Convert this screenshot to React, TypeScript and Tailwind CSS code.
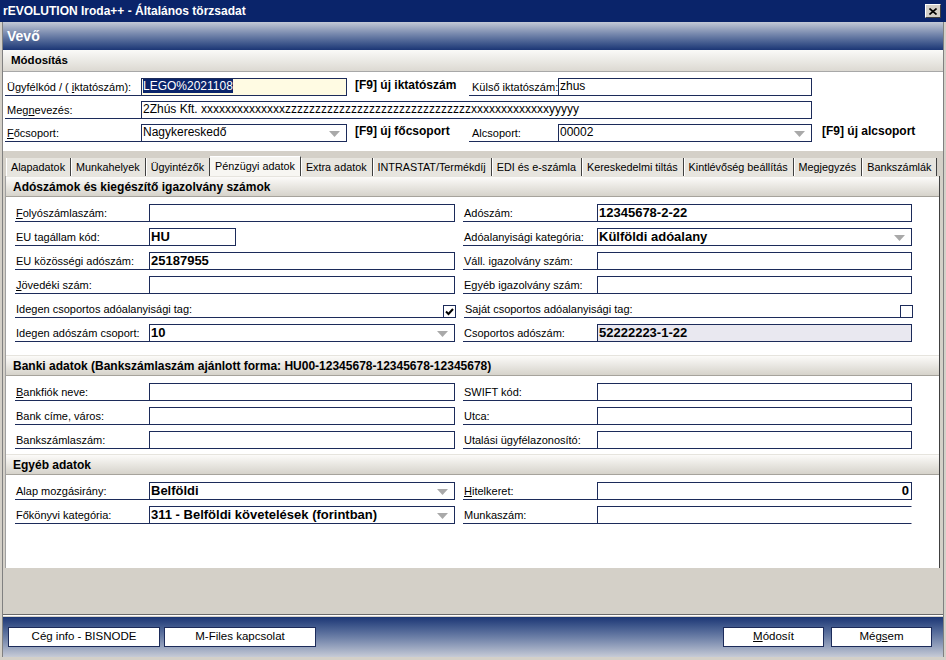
import React from 'react';

type Kids = { children?: React.ReactNode };

function Arrow() {
  return (
    <svg width="11" height="6" viewBox="0 0 11 6">
      <path d="M0 0 H11 L5.5 6 Z" fill="#a9a9a9" />
    </svg>
  );
}

function Label({ w, children }: { w: string } & Kids) {
  return (
    <div
      className={`${w} h-[18px] shrink-0 border-b border-[#1c2b5a] flex items-end pb-[1px] pl-[1px] text-[11px] leading-[13px] text-black whitespace-nowrap overflow-hidden`}
    >
      {children}
    </div>
  );
}

function Input({
  w,
  children,
  bold,
  bg = 'bg-white',
  drop,
  right,
  open,
}: { w: string; bold?: boolean; bg?: string; drop?: boolean; right?: boolean; open?: boolean } & Kids) {
  return (
    <div
      className={`${w} h-[18px] shrink-0 border border-[#1c2b5a] ${open ? 'border-r-transparent' : ''} ${bg} relative flex items-center ${
        right ? 'justify-end pr-[2px]' : 'pl-[1px]'
      } overflow-hidden whitespace-nowrap text-black ${bold ? 'font-bold text-[13px]' : 'text-[12px]'} leading-none`}
    >
      <span className="-mt-[2px]">{children}</span>
      {drop && (
        <span className="absolute right-[6px] top-[6px] flex">
          <Arrow />
        </span>
      )}
    </div>
  );
}

function Check({ checked }: { checked?: boolean }) {
  return (
    <div className="w-[13px] h-[13px] shrink-0 border border-[#1c2b5a] bg-white flex items-center justify-center">
      {checked && (
        <svg width="9" height="8" viewBox="0 0 9 8">
          <path d="M1 3.5 L3.5 6 L8 1" stroke="#000" strokeWidth="2" fill="none" />
        </svg>
      )}
    </div>
  );
}

function Section({ title }: { title: string }) {
  return (
    <div className="h-[21px] shrink-0 border-t border-[#e6e4de] border-b border-b-[#a6a39c] bg-gradient-to-b from-[#fcfbf9] to-[#d6d3cb] flex items-center pl-[7px] text-[12px] font-bold text-black">
      {title}
    </div>
  );
}

function PRow({
  l1,
  c1,
  l2,
  c2,
}: {
  l1: React.ReactNode;
  c1: React.ReactNode;
  l2: React.ReactNode;
  c2: React.ReactNode;
}) {
  return (
    <div className="flex items-end h-[18px]">
      <Label w="w-[134px]">{l1}</Label>
      <div className="w-[306px] flex">{c1}</div>
      <div className="w-[8px] shrink-0" />
      <Label w="w-[134px]">{l2}</Label>
      {c2}
    </div>
  );
}

const tabs = [
  'Alapadatok',
  'Munkahelyek',
  'Ügyintézők',
  'Pénzügyi adatok',
  'Extra adatok',
  'INTRASTAT/Termékdíj',
  'EDI és e-számla',
  'Kereskedelmi tiltás',
  'Kintlévőség beállítás',
  'Megjegyzés',
  'Bankszámlák',
];

const megnevezes =
  '2Zhús Kft. xxxxxxxxxxxxxxzzzzzzzzzzzzzzzzzzzzzzzzzzzzzzzxxxxxxxxxxxxxyyyyy';

export default function App() {
  return (
    <div className="w-[946px] h-[660px] bg-[#d4d0c8] flex flex-col overflow-hidden font-['Liberation_Sans',Arial,sans-serif]">
      {/* title bar */}
      <div className="h-[22px] shrink-0 bg-[#0a246a] flex items-center justify-between pl-[3px] pr-[5px]">
        <span className="text-white font-bold text-[12px]">rEVOLUTION Iroda++ - Általános törzsadat</span>
        <div className="w-[16px] h-[14px] bg-[#d4d0c8] border border-t-white border-l-white border-r-[#404040] border-b-[#404040] flex items-center justify-center">
          <svg width="8" height="7" viewBox="0 0 8 7">
            <path d="M0.5 0.5 L7.5 6.5 M7.5 0.5 L0.5 6.5" stroke="#000" strokeWidth="1.6" />
          </svg>
        </div>
      </div>

      <div className="flex-1 flex flex-col px-[2px]">
        <div className="flex-1 flex flex-col border-x border-[#808080]">
          {/* Vevő */}
          <div className="h-[28px] shrink-0 bg-gradient-to-b from-[#c4c9d6] via-[#6b7ea6] to-[#1c3675] flex items-center pl-[4px]">
            <span className="text-white font-bold text-[14px]">Vevő</span>
          </div>
          {/* Módosítás */}
          <div className="h-[22px] shrink-0 bg-gradient-to-b from-[#fafaf8] to-[#dcd9d2] border-b border-[#a8a8a8] flex items-center pl-[8px]">
            <span className="font-bold text-[11.5px] text-black">Módosítás</span>
          </div>

          {/* header form */}
          <div className="h-[79px] shrink-0 bg-white pt-[6px] flex flex-col gap-[5px]">
            <div className="flex items-end h-[18px]">
              <div className="w-[2px]" />
              <Label w="w-[136px]">
                <span className="pl-[1px]">
                  Ügyfélkód / ( <u>i</u>ktatószám):
                </span>
              </Label>
              <Input w="w-[206px]" bg="bg-[#fffbe3]">
                <span className="bg-[#0a246a] text-white">LEGO%2021108</span>
              </Input>
              <div className="w-[122px] shrink-0 pl-[8px] pb-[2px] font-bold text-[12px] whitespace-nowrap">
                [F9] új iktatószám
              </div>
              <Label w="w-[89px]">
                <span className="pl-[2px]">Külső iktatószám:</span>
              </Label>
              <Input w="w-[254px]">zhus</Input>
            </div>
            <div className="flex items-end h-[18px]">
              <div className="w-[2px]" />
              <Label w="w-[136px]">
                <span className="pl-[1px]">
                  Meg<u>n</u>evezés:
                </span>
              </Label>
              <Input w="w-[671px]">{megnevezes}</Input>
            </div>
            <div className="flex items-end h-[18px]">
              <div className="w-[2px]" />
              <Label w="w-[136px]">
                <span className="pl-[1px]">
                  <u>F</u>őcsoport:
                </span>
              </Label>
              <Input w="w-[206px]" drop>
                Nagykereskedő
              </Input>
              <div className="w-[122px] shrink-0 pl-[8px] pb-[2px] font-bold text-[12px] whitespace-nowrap">
                [F9] új főcsoport
              </div>
              <Label w="w-[89px]">
                <span className="pl-[2px]">Alcsoport:</span>
              </Label>
              <Input w="w-[254px]" drop>
                00002
              </Input>
              <div className="pl-[10px] pb-[2px] font-bold text-[12px] whitespace-nowrap">[F9] új alcsoport</div>
            </div>
          </div>

          {/* tabs */}
          <div className="h-[5px] shrink-0" />
          <div className="h-[20px] shrink-0 ml-[3px] flex items-end">
            {tabs.map((t) => {
              const active = t === 'Pénzügyi adatok';
              return (
                <div
                  key={t}
                  className={
                    active
                      ? 'h-[20px] px-[5px] bg-[#f7f6f2] border-t border-white border-r border-r-[#404040] flex items-center text-[10.8px] text-black whitespace-nowrap'
                      : 'h-[18px] px-[5px] bg-[#e7e5df] border-r border-r-[#404040] shadow-[inset_1px_0_0_#ffffff] flex items-center text-[10.8px] text-black whitespace-nowrap'
                  }
                >
                  {t}
                </div>
              );
            })}
          </div>

          {/* panel */}
          <div className="ml-[2px] w-[935px] h-[392px] shrink-0 bg-white border-l border-[#a0a0a0] border-r border-r-[#404040] flex flex-col">
            <Section title="Adószámok és kiegészítő igazolvány számok" />
            <div className="pl-[9px] pt-[7px] pb-[13px] flex flex-col gap-[6px]">
              <PRow
                l1={
                  <span>
                    <u>F</u>olyószámlaszám:
                  </span>
                }
                c1={<Input w="w-[306px]" />}
                l2="Adószám:"
                c2={
                  <Input w="w-[315px]" bold>
                    12345678-2-22
                  </Input>
                }
              />
              <PRow
                l1="EU tagállam kód:"
                c1={
                  <Input w="w-[87px]" bold>
                    HU
                  </Input>
                }
                l2="Adóalanyisági kategória:"
                c2={
                  <Input w="w-[315px]" bold drop>
                    Külföldi adóalany
                  </Input>
                }
              />
              <PRow
                l1="EU közösségi adószám:"
                c1={
                  <Input w="w-[306px]" bold>
                    25187955
                  </Input>
                }
                l2="Váll. igazolvány szám:"
                c2={<Input w="w-[315px]" />}
              />
              <PRow
                l1={
                  <span>
                    <u>J</u>övedéki szám:
                  </span>
                }
                c1={<Input w="w-[306px]" />}
                l2="Egyéb igazolvány szám:"
                c2={<Input w="w-[315px]" />}
              />
              <div className="flex items-end h-[18px]">
                <Label w="w-[428px]">Idegen csoportos adóalanyisági tag:</Label>
                <Check checked />
                <div className="w-[8px] shrink-0" />
                <Label w="w-[436px]">Saját csoportos adóalanyisági tag:</Label>
                <Check />
              </div>
              <PRow
                l1="Idegen adószám csoport:"
                c1={
                  <Input w="w-[306px]" bold drop>
                    10
                  </Input>
                }
                l2="Csoportos adószám:"
                c2={
                  <Input w="w-[315px]" bold bg="bg-[#e9e8f0]">
                    52222223-1-22
                  </Input>
                }
              />
            </div>

            <Section title="Banki adatok (Bankszámlaszám ajánlott forma: HU00-12345678-12345678-12345678)" />
            <div className="pl-[9px] pt-[7px] pb-[5px] flex flex-col gap-[6px]">
              <PRow
                l1={
                  <span>
                    <u>B</u>ankfiók neve:
                  </span>
                }
                c1={<Input w="w-[306px]" />}
                l2="SWIFT kód:"
                c2={<Input w="w-[315px]" />}
              />
              <PRow l1="Bank címe, város:" c1={<Input w="w-[306px]" />} l2="Utca:" c2={<Input w="w-[315px]" />} />
              <PRow
                l1="Bankszámlaszám:"
                c1={<Input w="w-[306px]" />}
                l2="Utalási ügyfélazonosító:"
                c2={<Input w="w-[315px]" />}
              />
            </div>

            <Section title="Egyéb adatok" />
            <div className="pl-[9px] pt-[7px] flex flex-col gap-[6px]">
              <PRow
                l1="Alap mozgásirány:"
                c1={
                  <Input w="w-[306px]" bold drop>
                    Belföldi
                  </Input>
                }
                l2={
                  <span>
                    <u>H</u>itelkeret:
                  </span>
                }
                c2={
                  <Input w="w-[315px]" bold right>
                    0
                  </Input>
                }
              />
              <PRow
                l1="Főkönyvi kategória:"
                c1={
                  <Input w="w-[306px]" bold drop>
                    311 - Belföldi követelések (forintban)
                  </Input>
                }
                l2="Munkaszám:"
                c2={<Input w="w-[315px]" open />}
              />
            </div>
          </div>

          <div className="flex-1" />

          {/* bottom bar */}
          <div className="h-[43px] shrink-0 border-t border-[#6a6a6a] shadow-[inset_0_1px_0_#ffffff] pt-[2px]">
            <div className="h-[40px] bg-gradient-to-b from-[#1c3675] via-[#6b7ea6] to-[#c7cbd6] flex items-start pt-[10px] px-[5px]">
              <button className="w-[152px] h-[20px] bg-white border border-[#1c2b5a] text-[11.5px] text-black">
                Cég info - BISNODE
              </button>
              <button className="ml-[4px] w-[152px] h-[20px] bg-white border border-[#1c2b5a] text-[11.5px] text-black">
                M-Files kapcsolat
              </button>
              <div className="flex-1" />
              <button className="w-[101px] h-[20px] bg-white border border-[#1c2b5a] text-[11.5px] text-black">
                <u>M</u>ódosít
              </button>
              <button className="ml-[7px] w-[101px] h-[20px] bg-white border border-[#1c2b5a] text-[11.5px] text-black">
                Még<u>s</u>em
              </button>
              <div className="w-[6px]" />
            </div>
          </div>
        </div>
      </div>
      <div className="h-[3px] shrink-0" />
    </div>
  );
}
